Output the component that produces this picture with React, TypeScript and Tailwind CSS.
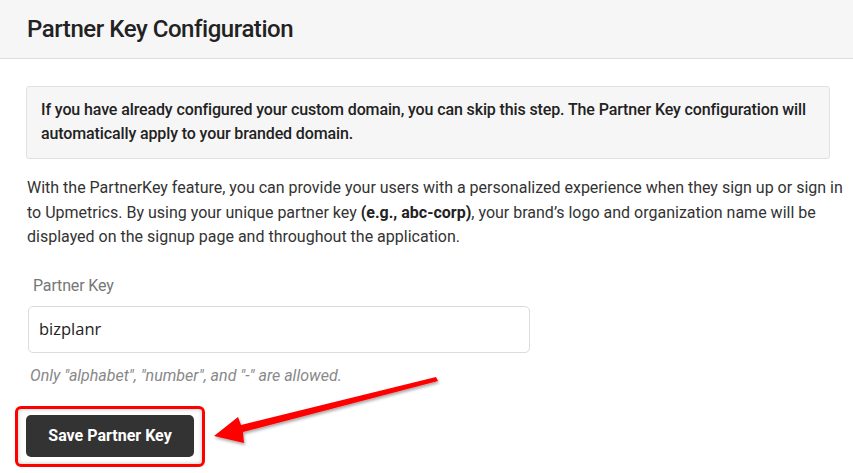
import React from 'react'

const Arrow = () => (
  <svg className="pointer-events-none absolute left-0 top-0" width="853" height="473" viewBox="0 0 853 473">
    <defs>
      <filter id="sh" x="-10%" y="-30%" width="120%" height="160%">
        <feDropShadow dx="1" dy="2" stdDeviation="1.5" floodColor="#000" floodOpacity="0.35" />
      </filter>
    </defs>
    <polygon
      points="214,436 238,417 241,425 436,377 438,381 243,432 244,443"
      fill="#ff0000"
      filter="url(#sh)"
    />
  </svg>
)

export default function App() {
  return (
    <div className="relative h-[473px] w-[853px] overflow-hidden bg-white font-['Roboto',sans-serif] text-[#333]">
      <div className="flex h-[59px] items-center border-b border-[#dcdcdc] bg-[#f6f6f6] pl-[27px]">
        <h1 className="text-[24px] font-medium tracking-[-0.45px] text-[#222]">Partner Key Configuration</h1>
      </div>

      <div className="pl-[26px] pt-[27px]">
        <div className="mr-[23px] rounded-[3px] border border-[#e0e0e0] bg-[#f6f6f6] px-[14px] pb-[12px] pt-[11px] text-[16px] font-medium leading-[24px] tracking-[-0.12px] text-[#222]">
          If you have already configured your custom domain, you can skip this step. The Partner Key configuration will
          automatically apply to your branded domain.
        </div>

        <p className="mt-[17px] w-[818px] pl-[1px] text-[16px] leading-[24.5px] text-[#333]">
          With the PartnerKey feature, you can provide your users with a personalized experience when they sign up or sign in
          to Upmetrics. By using your unique partner key <b className="font-bold text-[#222]">(e.g., abc-corp)</b>, your
          brand’s logo and organization name will be displayed on the signup page and throughout the application.
        </p>

        <div className="mt-[24px] w-[504px] pl-[2px]">
          <label className="block pl-[5px] text-[16px] leading-[24px] tracking-[-0.15px] text-[#777]">Partner Key</label>
          <div className="mt-[8px] flex h-[47px] items-center rounded-[5px] border border-[#dcdcdc] bg-white px-[10px] font-['Open_Sans',sans-serif] text-[16.5px] text-[#222]">
            bizplanr
          </div>
          <p className="mt-[11px] pl-[2px] text-[16px] italic leading-[24px] text-[#888]">
            Only "alphabet", "number", and "-" are allowed.
          </p>
        </div>

        <div className="mt-[18px] -ml-[11px] inline-flex rounded-[6px] border-[3px] border-[#f00] px-[8px] pb-[7px] pt-[6px] shadow-[inset_0_0_4px_rgba(0,0,0,0.25)]">
          <button className="h-[42px] w-[168px] rounded-[5px] bg-[#333] text-[16px] font-bold text-white">
            Save Partner Key
          </button>
        </div>
      </div>

      <Arrow />
    </div>
  )
}
